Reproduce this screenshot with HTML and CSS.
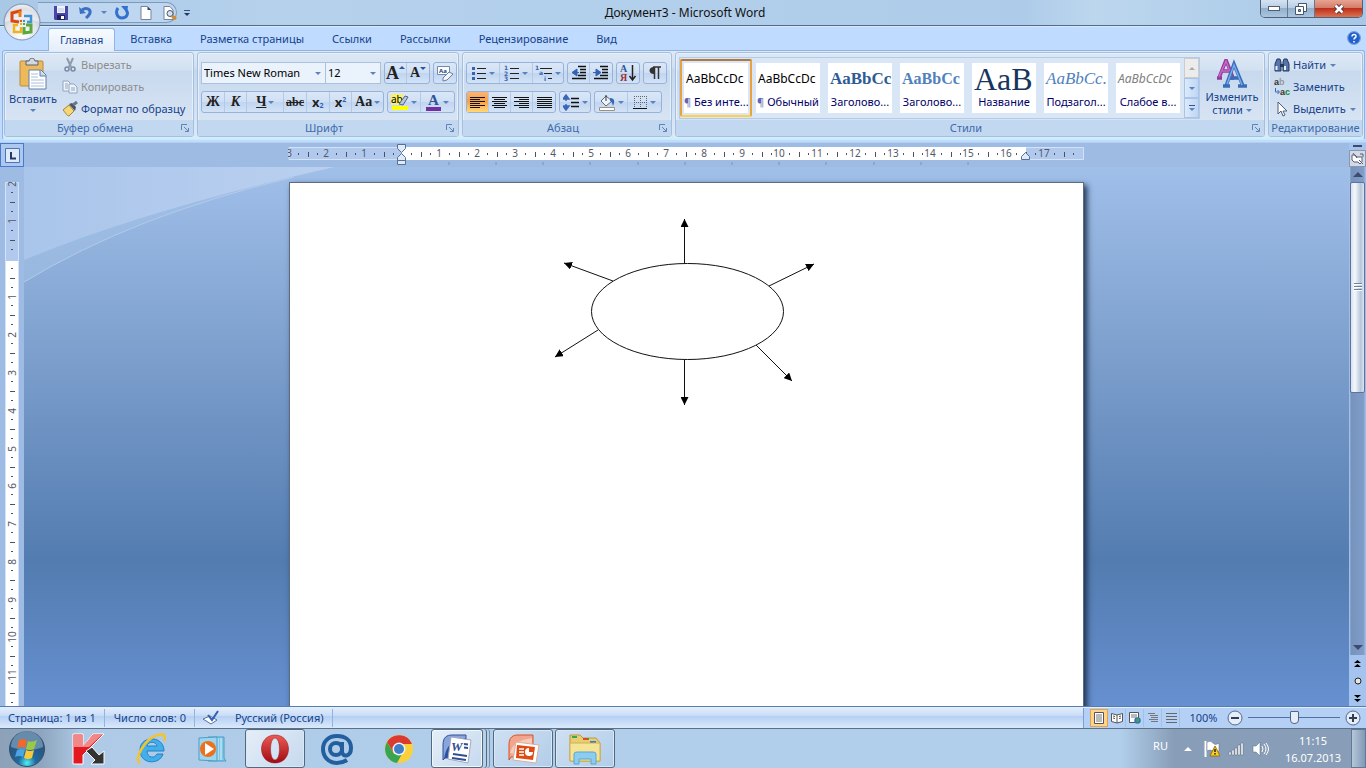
FILE: index.html
```html
<!DOCTYPE html>
<html lang="ru">
<head>
<meta charset="utf-8">
<title>Документ3 - Microsoft Word</title>
<link rel="stylesheet" href="styles.css">
</head>
<body>
<header class="titlebar">
  <div class="qat">
    <button class="ic" aria-label="Сохранить"><svg width="14" height="14" viewBox="0 0 14 14"><path d="M0 0h14v14H1L0 13z" fill="#4a45a8"/><path d="M3 0h8v7H3z" fill="#eef3fd"/><path d="M3 9h8v5H3z" fill="#23235f"/><path d="M7 10h3v3H7z" fill="#fff"/><path d="M4 3h6M4 5h6" stroke="#b9c7e6"/></svg></button>
    <button class="ic" aria-label="Отменить"><svg width="14" height="14" viewBox="0 0 14 14"><path d="M3 4c4-3 9-1 8 3-1 3-3 4-4 5" fill="none" stroke="#3d6fc4" stroke-width="3"/><path d="M0 1l1 7 6-1z" fill="#3d6fc4"/></svg></button>
    <button class="ic narrow" aria-label="Список отмены"><i class="car"></i></button>
    <button class="ic" aria-label="Повторить"><svg width="14" height="14" viewBox="0 0 14 14"><path d="M3 2C0 6 2 12 7 12s7-5 4-8" fill="none" stroke="#3470ce" stroke-width="3"/><path d="M6 0h7l-1 7z" fill="#3470ce"/></svg></button>
    <button class="ic" aria-label="Создать"><svg width="12" height="14" viewBox="0 0 12 14"><path d="M1 .5h6.500L11 4v9.500H1z" fill="#fff" stroke="#77839a"/><path d="M7.500.5V4H11z" fill="#39465e"/></svg></button>
    <button class="ic" aria-label="Просмотр"><svg width="14" height="14" viewBox="0 0 14 14"><path d="M1 .5h6L10 4v9.500H1z" fill="#fff" stroke="#77839a"/><circle cx="7" cy="7.500" r="3" fill="#cfe4f8" stroke="#4b5565"/><path d="M9 10l4 3" stroke="#d88b26" stroke-width="3"/></svg></button>
  </div>
  <button class="ic custom" aria-label="Настройка панели"><i class="bar"></i><i class="car dark"></i></button>
  <h1>Документ3 - Microsoft Word</h1>
  <div class="wincontrols">
    <button aria-label="Свернуть"><svg width="14" height="6" viewBox="0 0 14 6"><rect x="1.500" y=".5" width="11" height="4" fill="#fff" stroke="#4f5e72"/></svg></button>
    <button aria-label="Восстановить"><svg width="12" height="12" viewBox="0 0 12 12"><path d="M3.500.5h8v8h-8z" fill="#fff" stroke="#46566c"/><path d="M.5 3.500h8v8h-8z" fill="#fff" stroke="#46566c"/><path d="M3.500 6.500h2v2h-2z" fill="#8aa5c4" stroke="#46566c"/></svg></button>
    <button class="close" aria-label="Закрыть"><svg width="12" height="10" viewBox="0 0 12 10"><path d="M2.500 1.500l7 7m0-7l-7 7" stroke="#5a3038" stroke-width="4.500"/><path d="M2.500 1.500l7 7m0-7l-7 7" stroke="#fff" stroke-width="2.500"/></svg></button>
  </div>
  <button class="office" aria-label="Кнопка Office"><svg width="38" height="38" viewBox="0 0 38 38"><defs><radialGradient id="ob" cx=".5" cy=".85" r=".9"><stop offset="0" stop-color="#fff"/><stop offset=".5" stop-color="#dfe3ea"/><stop offset=".8" stop-color="#b9c1cd"/><stop offset="1" stop-color="#f5f8fb"/></radialGradient></defs><circle cx="19" cy="19" r="18" fill="url(#ob)" stroke="#7f93ad"/><path d="M2 19a17 17 0 0 1 34 0c-10-4-24-4-34 0z" fill="#fff" opacity=".5"/><g fill="none" stroke-width="3"><path d="M17 9V8l-8 2v8l7 1" stroke="#d9480f"/><path d="M17 14V8" stroke="#ee7a16"/><path d="M21 13h7v6h-4" stroke="#3f94d8" stroke-width="2.500"/><path d="M15 22h-4v7h7v-5" stroke="#f0b21d" stroke-width="2.500"/><path d="M21 24v6l7-1v-7h-5" stroke="#5aa83a"/></g><path d="M17 17h2v2h-2z" fill="#e25a10"/><path d="M20 17h2v2h-2z" fill="#3f94d8"/><path d="M17 20h2v2h-2z" fill="#f0b21d"/><path d="M20 20h2v2h-2z" fill="#5aa83a"/></svg></button>
</header>

<nav class="tabs">
  <button class="tab active">Главная</button><button class="tab">Вставка</button><button class="tab">Разметка страницы</button><button class="tab">Ссылки</button><button class="tab">Рассылки</button><button class="tab">Рецензирование</button><button class="tab">Вид</button>
  <button class="ic help" aria-label="Справка"><svg width="14" height="14" viewBox="0 0 14 14"><circle cx="7" cy="7" r="6.500" fill="#2060cf" stroke="#dbe9fb"/><circle cx="7" cy="7" r="6.500" fill="none" stroke="#396bb8" stroke-width=".6"/><path d="M5 5.500c0-3 4.500-2.500 4 0C9 7 7 6.500 7 8.500M7 10v1.500" fill="none" stroke="#fff" stroke-width="1.500"/></svg></button>
</nav>

<section class="ribbon">
  <div class="group clip">
    <div class="gbody">
      <button class="big"><svg width="28" height="32" viewBox="0 0 28 32"><rect x="1" y="3" width="23" height="25" rx="1" fill="#edb95d" stroke="#bd893b"/><path d="M7 3h3c1-4 5-4 6 0h3v4H7z" fill="#d2d8df" stroke="#59636f"/><path d="M10 12h12l5 5v14H10z" fill="#fff" stroke="#5f7fa8"/><path d="M21 12v6h6" fill="#cad8ec" stroke="#5f7fa8"/><path d="M12 16h7m-7 3h7m-7 3h13m-13 3h13m-13 3h13" stroke="#a9c0de"/></svg><span>Вставить</span><i class="car"></i></button>
      <div class="lines">
        <button class="line off"><svg width="16" height="16" viewBox="0 0 16 16"><path d="M5 1l4 9m2-9L7 10" stroke="#8e9bad" stroke-width="2"/><circle cx="5" cy="12" r="2" fill="none" stroke="#7a8aa5" stroke-width="1.500"/><circle cx="11" cy="12" r="2" fill="none" stroke="#7a8aa5" stroke-width="1.500"/></svg>Вырезать</button>
        <button class="line off"><svg width="16" height="16" viewBox="0 0 16 16"><path d="M1 2h5l3 3v7H1z" fill="#eef3fa" stroke="#91a5c1"/><path d="M7 5h5l3 3v6H7z" fill="#eef3fa" stroke="#91a5c1"/><path d="M3 5h3M3 7h3M3 9h3m3 0h4m-4 2h4" stroke="#91a5c1"/></svg>Копировать</button>
        <button class="line"><svg width="16" height="16" viewBox="0 0 16 16"><path d="M1 9l6-5 5 6-5 5c-2 0-4-4-6-6z" fill="#f4d778" stroke="#a48231"/><path d="M7 3l6 7 1-4-4-4z" fill="#4b5262"/><path d="M11 4l4-3" stroke="#68758b" stroke-width="3"/></svg>Формат по образцу</button>
      </div>
    </div>
    <footer><span>Буфер обмена</span><button class="launch" aria-label="Параметры буфера"><svg width="8" height="8" viewBox="0 0 8 8"><path d="M.5 6V.5H6M3 3l4 4M7.500 4v3.500H4" fill="none" stroke="#5f83b4"/></svg></button></footer>
  </div>

  <div class="group font">
    <div class="gbody rows">
      <div class="row">
        <div class="combos"><label class="combo name"><select aria-label="Шрифт"><option>Times New Roman</option></select><i class="car"></i></label><label class="combo size"><select aria-label="Размер шрифта"><option>12</option></select><i class="car"></i></label></div>
        <div class="seg"><button class="serif g18">A<i class="up"></i></button><button class="serif g14">A<i class="car blue"></i></button></div>
        <div class="seg"><button aria-label="Очистить формат"><svg width="17" height="17" viewBox="0 0 17 17"><path d="M.5 1.500h12v8H.5z" fill="#fff" stroke="#6f88b4"/><text x="2" y="8" class="tiny">Aa</text><path d="M6 13l6-6 4 2-6 6-4 1z" fill="#f3f5fa" stroke="#6f7d9b"/></svg></button></div>
      </div>
      <div class="row">
        <div class="seg"><button class="serif">Ж</button><button class="serif it">К</button><button class="serif w36"><u>Ч</u><i class="car"></i></button><button class="serif strike">abc</button><button class="strong">x<sub>2</sub></button><button class="strong">x<sup>2</sup></button><button class="serif w30">Aa<i class="car"></i></button></div>
        <div class="seg"><button class="w34" aria-label="Цвет выделения"><svg width="18" height="18" viewBox="0 0 18 18"><path d="M0 1h12v11H0z" fill="#f6f06a"/><text x="0" y="10" class="ab">ab</text><path d="M8 11l6-8 3 1-5 8z" fill="#b7c9e6" stroke="#4e6288"/><path d="M1 13h16v4H1z" fill="#ff0"/></svg><i class="car"></i></button><button class="w34 colorletter"><span>A</span><i class="car"></i></button></div>
      </div>
    </div>
    <footer><span>Шрифт</span><button class="launch" aria-label="Параметры шрифта"><svg width="8" height="8" viewBox="0 0 8 8"><path d="M.5 6V.5H6M3 3l4 4M7.500 4v3.500H4" fill="none" stroke="#5f83b4"/></svg></button></footer>
  </div>

  <div class="group para">
    <div class="gbody rows">
      <div class="row">
        <div class="seg"><button class="w34" aria-label="Маркеры"><svg width="16" height="16" viewBox="0 0 16 16"><path d="M1 2h3v3H1zM1 7h3v3H1zM1 12h3v3H1z" fill="#3a62b0"/><path d="M6 3.500h9m-9 5h9m-9 5h9" stroke="#222"/></svg><i class="car"></i></button><button class="w34" aria-label="Нумерация"><svg width="16" height="16" viewBox="0 0 16 16"><text x="0" y="5" class="num">1</text><text x="0" y="10.500" class="num">2</text><text x="0" y="16" class="num">3</text><path d="M6 3.500h9m-9 5h9m-9 5h9" stroke="#222"/></svg><i class="car"></i></button><button class="w30" aria-label="Многоуровневый список"><svg width="18" height="16" viewBox="0 0 18 16"><text x="0" y="5" class="num">1</text><text x="4" y="10" class="num">a</text><text x="9" y="16" class="num">i</text><path d="M5 3.500h12m-8 5h8m-4 5h4" stroke="#222"/></svg><i class="car"></i></button></div>
        <div class="seg"><button aria-label="Уменьшить отступ"><svg width="16" height="16" viewBox="0 0 16 16"><path d="M7 1.500h8M9 4.500h6M9 7.500h6M7 10.500h8M1 13.500h14" stroke="#111" stroke-width="1.500"/><path d="M6 4L1 7.500 6 11zM5 7.500h3" fill="#3561b5" stroke="#3561b5"/></svg></button><button aria-label="Увеличить отступ"><svg width="16" height="16" viewBox="0 0 16 16"><path d="M7 1.500h8M9 4.500h6M9 7.500h6M7 10.500h8M1 13.500h14" stroke="#111" stroke-width="1.500"/><path d="M3 4l5 3.500L3 11zM0 7.500h4" fill="#3561b5" stroke="#3561b5"/></svg></button></div>
        <div class="seg"><button aria-label="Сортировка"><svg width="16" height="18" viewBox="0 0 16 18"><text x="0" y="8" class="srt blue">А</text><text x="0" y="17" class="srt red">Я</text><path d="M12.500 1v14M9.500 12l3 4 3-4" fill="none" stroke="#222" stroke-width="1.500"/></svg></button></div>
        <div class="seg"><button aria-label="Знаки абзаца"><svg width="12" height="14" viewBox="0 0 12 14"><path d="M11 1H5c-6 0-6 7 0 7V1" fill="#333"/><path d="M5.500 1v12M9.500 1v12M4 1h8" stroke="#333" stroke-width="1.500"/></svg></button></div>
      </div>
      <div class="row">
        <div class="seg"><button class="on" aria-label="По левому краю"><svg width="15" height="13" viewBox="0 0 15 13"><path d="M0 1.500h15m-15 2h10m-10 2h15m-15 2h10m-10 2h15m-15 2h10" stroke="#111"/></svg></button><button aria-label="По центру"><svg width="15" height="13" viewBox="0 0 15 13"><path d="M0 1.500h15M2 3.500h11m-13 2h15m-13 2h11m-13 2h15m-13 2h11" stroke="#111"/></svg></button><button aria-label="По правому краю"><svg width="15" height="13" viewBox="0 0 15 13"><path d="M0 1.500h15m-10 2h10m-15 2h15m-10 2h10m-15 2h15m-10 2h10" stroke="#111"/></svg></button><button aria-label="По ширине"><svg width="15" height="13" viewBox="0 0 15 13"><path d="M0 1.500h15m-15 2h15m-15 2h15m-15 2h15m-15 2h15m-15 2h15" stroke="#111"/></svg></button></div>
        <div class="seg"><button class="w30" aria-label="Интервал"><svg width="17" height="17" viewBox="0 0 17 17"><path d="M3 1L0 5h6zM3 16l-3-4h6zM3 4v3m0 3v3" fill="#3a68b8" stroke="#3a68b8" stroke-width="1.500"/><path d="M8 4.500h8m-8 4h8m-8 4h8" stroke="#111" stroke-width="1.500"/></svg><i class="car"></i></button></div>
        <div class="seg"><button class="w34" aria-label="Заливка"><svg width="18" height="17" viewBox="0 0 18 17"><path d="M3 7l5-5 6 5-6 5z" fill="#eef3fa" stroke="#5c6b85"/><path d="M8 1v6" stroke="#333"/><path d="M12 4c5 0 5 4 3 8-1-3-1-4-3-5z" fill="#3a68b8"/><path d="M1.500 13.500h15v3h-15z" fill="#fff" stroke="#99927f"/></svg><i class="car"></i></button><button class="w34" aria-label="Границы"><svg width="15" height="15" viewBox="0 0 15 15"><path d="M1 1.500h13M1 7.500h13M1.500 1v12M7.500 1v12M13.500 1v12" stroke="#666" stroke-dasharray="1 1"/><path d="M0 13.500h14" stroke="#111"/></svg><i class="car"></i></button></div>
      </div>
    </div>
    <footer><span>Абзац</span><button class="launch" aria-label="Параметры абзаца"><svg width="8" height="8" viewBox="0 0 8 8"><path d="M.5 6V.5H6M3 3l4 4M7.500 4v3.500H4" fill="none" stroke="#5f83b4"/></svg></button></footer>
  </div>

  <div class="group styles">
    <div class="gbody">
      <div class="gallery">
        <button class="style sel"><b class="p1">AaBbCcDc</b><span><em>¶</em> Без инте...</span></button>
        <button class="style"><b class="p1">AaBbCcDc</b><span><em>¶</em> Обычный</span></button>
        <button class="style"><b class="p3">AaBbCc</b><span>Заголово...</span></button>
        <button class="style"><b class="p4">AaBbCc</b><span>Заголово...</span></button>
        <button class="style"><b class="p5">AaB</b><span>Название</span></button>
        <button class="style"><b class="p6">AaBbCc.</b><span>Подзагол...</span></button>
        <button class="style"><b class="p7">AaBbCcDc</b><span>Слабое в...</span></button>
        <div class="gscroll"><button class="dim" aria-label="Вверх"><i class="up"></i></button><button aria-label="Вниз"><i class="car"></i></button><button aria-label="Ещё"><i class="bar"></i><i class="car"></i></button></div>
      </div>
      <button class="big change"><svg width="30" height="30" viewBox="0 0 30 30"><path d="M2 19L9 1l7 18M5 12h8M0 19h5m8 0h4" fill="none" stroke="#8e3d99" stroke-width="3.500"/><path d="M2 18L9 2l6 16M5 12h8" fill="none" stroke="#cf62ca" stroke-width="1.500"/><path d="M9 27l8-22 9 22M12 19h11M6 27h7m8 0h9" fill="none" stroke="#376db9" stroke-width="3.500"/><path d="M10 25l7-19 8 20" fill="none" stroke="#77abe9" stroke-width="1.500"/></svg><span>Изменить<br>стили <i class="car"></i></span></button>
    </div>
    <footer><span>Стили</span><button class="launch" aria-label="Окно стилей"><svg width="8" height="8" viewBox="0 0 8 8"><path d="M.5 6V.5H6M3 3l4 4M7.500 4v3.500H4" fill="none" stroke="#5f83b4"/></svg></button></footer>
  </div>

  <div class="group edit">
    <div class="gbody"><div class="lines">
      <button class="line"><svg width="16" height="16" viewBox="0 0 16 16"><path d="M3 2h3l1 3v9H1V7zM10 2h3l2 5v7H9V5z" fill="#5575ac" stroke="#23395f"/><path d="M6 7h4v3H6z" fill="#23395f"/><path d="M2.500 9v4M11 9v4" stroke="#e9f1fc" stroke-width="2"/></svg>Найти<i class="car"></i></button>
      <button class="line"><svg class="open" width="16" height="20" viewBox="0 0 16 20"><text x="0" y="8" class="rep">a<tspan fill="#999">b</tspan></text><text x="6" y="18" class="rep">a<tspan fill="#178a17">c</tspan></text><path d="M1.500 11v4H5M3.500 13L5.500 15l-2 2" fill="none" stroke="#3a68b8"/></svg>Заменить</button>
      <button class="line"><svg width="16" height="16" viewBox="0 0 16 16"><path d="M4 1v12l3-3 2 5 2-1-2-4h4z" fill="#fff" stroke="#4c5e7d"/></svg>Выделить<i class="car"></i></button>
    </div></div>
    <footer><span>Редактирование</span></footer>
  </div>
</section>

<main class="work">
  <button class="tabstop" aria-label="Табуляция"><svg width="15" height="15" viewBox="0 0 15 15"><path d="M.5.5h14v14H.5z" fill="#dfe9f7" stroke="#4874c4"/><path d="M6 4v6.500h5" fill="none" stroke="#243a66" stroke-width="2"/></svg></button>
  <div class="hruler">
    <svg width="797" height="24" viewBox="-1 0 797 24">
      <path d="M0 4.500h794.500v12H0z" fill="#b1c9ec" stroke="#d3e2f7"/><path d="M113 4h624v13H113z" fill="#fff"/>
      <g stroke="#4b5361" stroke-dasharray="1 36.800" shape-rendering="crispEdges"><path d="M9 11H790M28 11H790" stroke-width="2"/><path d="M19 11H790" stroke-width="5"/></g>
      <g class="rulenum"><text x="0" y="14">3</text><text x="37" y="14">2</text><text x="75" y="14">1</text><text x="150" y="14">1</text><text x="188" y="14">2</text><text x="226" y="14">3</text><text x="264" y="14">4</text><text x="302" y="14">5</text><text x="339" y="14">6</text><text x="377" y="14">7</text><text x="415" y="14">8</text><text x="453" y="14">9</text><text x="490" y="14">10</text><text x="528" y="14">11</text><text x="566" y="14">12</text><text x="604" y="14">13</text><text x="641" y="14">14</text><text x="679" y="14">15</text><text x="717" y="14">16</text><text x="755" y="14">17</text></g>
      <path d="M160 19v3m47-3v3m47-3v3m47-3v3m48-3v3m47-3v3m47-3v3m47-3v3m47-3v3m48-3v3m47-3v3m47-3v3" stroke="#8092ad"/>
      <g fill="#e2eaf6" stroke="#53709f"><path d="M108.500 1.500h8v4l-4 4-4-4zM108.500 17.500v-3l4-4 4 4v3zM108.500 17.500h8v4h-8zM732.500 16.500v-3l4-4 4 4v3z"/></g>
    </svg>
  </div>
  <div class="corner"><i></i><button aria-label="Линейка"><svg width="15" height="15" viewBox="0 0 15 15"><path d="M2 4h3l2 2h5v5l-2 2-2-2H4L2 9z" fill="#fff" stroke="#525f7a"/><path d="M3 2l4 5M10 3h3v3M9 9l4 4" stroke="#525f7a" fill="none"/></svg></button></div>
  <div class="vruler">
    <svg width="14" height="1122" viewBox="0 0 14 1122">
      <path d="M.5.500h13V1200H.5z" fill="#b1c9ec" stroke="#d3e2f7"/><path d="M1 79h12v1043H1z" fill="#fff"/>
      <g stroke="#4b5361" stroke-dasharray="1 36.800" shape-rendering="crispEdges"><path d="M7 10V1122M7 29V1122" stroke-width="2"/><path d="M7.500 20V1122" stroke-width="5"/></g>
      <g class="rulenum"><text transform="translate(11 2) rotate(-90)">2</text><text transform="translate(11 39) rotate(-90)">1</text><text transform="translate(11 115) rotate(-90)">1</text><text transform="translate(11 153) rotate(-90)">2</text><text transform="translate(11 191) rotate(-90)">3</text><text transform="translate(11 229) rotate(-90)">4</text><text transform="translate(11 267) rotate(-90)">5</text><text transform="translate(11 304) rotate(-90)">6</text><text transform="translate(11 342) rotate(-90)">7</text><text transform="translate(11 380) rotate(-90)">8</text><text transform="translate(11 418) rotate(-90)">9</text><text transform="translate(11 455) rotate(-90)">10</text><text transform="translate(11 493) rotate(-90)">11</text></g>
    </svg>
  </div>
  <div class="canvas">
    <svg class="swoosh" width="310" height="118" viewBox="0 0 310 118"><defs><linearGradient id="sw" x2="1"><stop offset="0" stop-color="#a9c5ea"/><stop offset="1" stop-color="#bbd0f0"/></linearGradient></defs><path d="M0 115Q110 48 265 12L310 0 0 0z" fill="#a2bfe4" opacity=".6"/><path d="M0 93Q120 43 310 0H0z" fill="url(#sw)"/><path d="M0 115Q110 48 270 10" fill="none" stroke="#b2caeb"/></svg>
    <article class="page">
      <svg width="793" height="523" viewBox="1 1 793 523"><defs><marker id="ah" viewBox="0 0 8 8" refX="8" refY="4" markerWidth="8" markerHeight="8" markerUnits="userSpaceOnUse" orient="auto"><path d="M0 0l8 4-8 4z"/></marker></defs>
      <ellipse cx="398.500" cy="129.500" rx="96" ry="48" fill="#fff" stroke="#111"/>
      <g stroke="#111"><path d="M395.500 81V37" marker-end="url(#ah)"/><path d="M324 99l-49-18" marker-end="url(#ah)"/><path d="M480 104l45-22" marker-end="url(#ah)"/><path d="M309 148l-43 27" marker-end="url(#ah)"/><path d="M395.500 178v45" marker-end="url(#ah)"/><path d="M467 163l36 36" marker-end="url(#ah)"/></g></svg>
    </article>
  </div>
  <div class="scroll">
    <button class="sb" aria-label="Прокрутить вверх"><i class="up"></i></button>
    <div class="track"><div class="thumb"><i></i><i></i><i></i></div></div>
    <button class="sb" aria-label="Прокрутить вниз"><i class="car"></i></button>
    <div class="browse"><button aria-label="Предыдущая страница"><svg width="7" height="8" viewBox="0 0 7 8"><path d="M0 3l3.500-3L7 3zM0 7l3.500-3L7 7z"/></svg></button><button aria-label="Выбор объекта"><svg width="8" height="8" viewBox="0 0 8 8"><circle cx="4" cy="4" r="3" fill="#e6e6df" stroke="#222"/></svg></button><button aria-label="Следующая страница"><svg width="7" height="8" viewBox="0 0 7 8"><path d="M0 1l3.500 3L7 1zM0 5l3.500 3L7 5z"/></svg></button></div>
  </div>
</main>

<div class="status">
  <span>Страница: 1 из 1</span><span>Число слов: 0</span><span class="lang"><svg width="17" height="15" viewBox="0 0 17 15"><path d="M0 9l7-3 7 4-6 4z" fill="#fff" stroke="#5572a5"/><path d="M5 5l4 5 6-9" fill="none" stroke="#335fae" stroke-width="2"/></svg>Русский (Россия)</span>
  <div class="views"><button class="on" aria-label="Разметка"><svg width="12" height="12" viewBox="0 0 12 12"><path d="M1.500.5h9v11h-9z" fill="#fff" stroke="#555"/><path d="M3 3h6M3 5h6M3 7h6M3 9h6" stroke="#777"/></svg></button><button aria-label="Чтение"><svg width="12" height="12" viewBox="0 0 12 12"><path d="M.5 1.500L6 3l5.500-1.500v8L6 11 .5 9.500zM6 3v8" fill="#fff" stroke="#555"/><path d="M2 4l2 .5M2 6l2 .5M8 4.500l2-.5M8 6.500l2-.5" stroke="#555"/></svg></button><button aria-label="Веб-документ"><svg width="12" height="12" viewBox="0 0 12 12"><path d="M.5.5h9v10h-9z" fill="#fff" stroke="#555"/><path d="M2 3h6M2 5h6" stroke="#777"/><circle cx="8.500" cy="8.500" r="3.200" fill="#2d74b9"/><path d="M7 7l3-1v3l-2 2z" fill="#4ea24d"/></svg></button><button aria-label="Структура"><svg width="12" height="12" viewBox="0 0 12 12"><path d="M1 1.500h7m-5 2h8m-7 2h7m-9 2h9m-7 2h7" stroke="#777"/></svg></button><button aria-label="Черновик"><svg width="12" height="12" viewBox="0 0 12 12"><path d="M1 1.500h11m-11 3h11m-11 3h11m-11 3h11" stroke="#666"/></svg></button></div>
  <button class="pct">100%</button>
  <button class="ic zoomb" aria-label="Уменьшить"><svg width="16" height="16" viewBox="0 0 16 16"><circle cx="8" cy="8" r="7" fill="#e5edf9" stroke="#53698e"/><path d="M4 8h8" stroke="#333e55" stroke-width="2"/></svg></button>
  <input class="zoom" type="range" min="0" max="100" value="50" aria-label="Масштаб">
  <button class="ic zoomb" aria-label="Увеличить"><svg width="16" height="16" viewBox="0 0 16 16"><circle cx="8" cy="8" r="7" fill="#e5edf9" stroke="#53698e"/><path d="M4 8h8M8 4v8" stroke="#333e55" stroke-width="2"/></svg></button>
</div>

<footer class="taskbar">
  <button class="start" aria-label="Пуск"><svg width="38" height="38" viewBox="0 0 38 38"><defs><radialGradient id="st" cy=".9"><stop offset="0" stop-color="#4ff0f6"/><stop offset=".5" stop-color="#216a9f"/><stop offset="1" stop-color="#285a86"/></radialGradient></defs><circle cx="19" cy="19" r="17.500" fill="url(#st)" stroke="#344f6b"/><path d="M3 17a16 16 0 0 1 32 0c-9 4-22 4-32 0z" fill="#c0d8e8" opacity=".4"/><path d="M11 10q4-2 8 0l-2 8q-4-2-8 0z" fill="#f0682b"/><path d="M20 11q4 2 9-1l-3 9q-4 2-8 0z" fill="#9ac947"/><path d="M9 20q4-2 8 0l-2 7q-4-2-8 0z" fill="#4ba6e3"/><path d="M18 20q4 2 8 0l-2 8q-4 2-8 0z" fill="#fbc837"/></svg></button>
  <button class="task" aria-label="Kaspersky"><svg width="34" height="32" viewBox="0 0 34 32"><path d="M1 1h10v12L21 1h11L18 15l-7 7v9H1z" fill="#e21a20" stroke="#fff"/><path d="M2 2h8v11L21 2h9L17 14H2z" fill="#f6a3a4" opacity=".8"/><path d="M14 18l6-4 7 8 5-4v13H19l4-4z" fill="#333" stroke="#fff"/></svg></button>
  <button class="task" aria-label="Internet Explorer"><svg width="32" height="32" viewBox="0 0 32 32"><path d="M28 21c-3 11-23 11-23-4C5 2 29 2 29 18H12c0 7 8 8 10 3zM12 13h10c-1-5-9-5-10 0z" fill="#42aeea" stroke="#2280c8"/><path d="M5 30c-7-3 5-25 18-28 6-2 8 1 6 6" fill="none" stroke="#f4c42b" stroke-width="2.500"/></svg></button>
  <button class="task" aria-label="Проигрыватель"><svg width="30" height="28" viewBox="0 0 30 28"><path d="M10 2h16v21l2 3H10z" fill="#81c7e5" stroke="#4c9cc3"/><path d="M23 3v22M20 3v22" stroke="#d9f2fb"/><path d="M1 3l18-1v24L1 25z" fill="#9cd6ee" stroke="#4d9dc6"/><circle cx="10" cy="14" r="8" fill="#ee701c"/><path d="M7 8l9 6-9 6z" fill="#fff"/></svg></button>
  <button class="task run lit" aria-label="Opera"><svg width="30" height="32" viewBox="0 0 30 32"><defs><linearGradient id="op" y2="1" x2="0"><stop stop-color="#ee5b52"/><stop offset="1" stop-color="#a00b13"/></linearGradient></defs><path d="M15 2C-3 2-3 30 15 30S33 2 15 2zm0 3c6 0 6 22 0 22S9 5 15 5z" fill="url(#op)" stroke="#8e1117" stroke-width=".5"/></svg></button>
  <button class="task" aria-label="Почта"><svg width="34" height="32" viewBox="0 0 34 32"><g fill="none" stroke="#235f9f"><circle cx="16" cy="16" r="6" stroke-width="4"/><path d="M22 9v9c0 7 9 6 9-3C31 7 25 3 17 3 8 3 3 9 3 16s5 14 14 14c4 0 7-1 10-3" stroke-width="4"/></g></svg></button>
  <button class="task" aria-label="Chrome"><svg width="30" height="30" viewBox="0 0 30 30"><circle cx="15" cy="15" r="14" fill="#fbd13b"/><path d="M3 8a14 14 0 0 1 25 2H15l-6 8z" fill="#da3a30"/><path d="M3 8l7 12 8 0-5 9A14 14 0 0 1 3 8z" fill="#3ba450"/><circle cx="15" cy="15" r="6.500" fill="#eef3f7"/><circle cx="15" cy="15" r="5" fill="#3e7fc7"/></svg></button>
  <button class="task run word lit" aria-label="Word"><svg width="34" height="32" viewBox="0 0 34 32"><path d="M3 27V12C3 4 7 2 12 2h14v23H5z" fill="#89a5dc" stroke="#305397"/><path d="M4 27C6 12 12 7 26 5v20H4z" fill="#2d52a1"/><path d="M11 4l20 3-3 23-20-4z" fill="#fff" stroke="#a2aac0"/><text x="11" y="18" class="wletter">W</text><path d="M24 11l4 .5m-4 3l4 .5M13 21l14 2m-15 2l14 2" stroke="#304f96" stroke-width="2"/></svg></button>
  <button class="task run ppt" aria-label="PowerPoint"><svg width="34" height="32" viewBox="0 0 34 32"><path d="M3 27V12C3 4 7 2 12 2h15v22H5z" fill="#f2a58b" stroke="#d75329"/><path d="M4 20C6 12 12 7 26 5v19z" fill="#f7cabb"/><path d="M10 9l23 3-3 18-23-3z" fill="#fff" stroke="#d5afa4"/><path d="M11 12l18 2-2 13-17-2z" fill="#df4b12"/><path d="M13 16h5m-5 3h5m-5 3h5" stroke="#fff" stroke-width="1.500"/><circle cx="23" cy="19" r="4" fill="#fff"/><path d="M23 19v-4h5v4z" fill="#df4b12"/></svg></button>
  <button class="task run" aria-label="Проводник"><svg width="34" height="32" viewBox="0 0 34 32"><path d="M2 2h10l3 3h13l4 5v18H2z" fill="#e9cd73" stroke="#bd9a3e"/><path d="M4 4h5M15 6h6M22 9h6" stroke="#3aa84c" stroke-width="2"/><path d="M15 6h5" stroke="#d84a32" stroke-width="2"/><path d="M22 9h6" stroke="#2a82cb" stroke-width="2"/><path d="M2 10h30v18H2z" fill="#f5e496" stroke="#cdb050"/><path d="M6 31V21q0-2 3-2h16q3 0 3 2v10h-5v-5H11v5z" fill="#8bcdf0" stroke="#5aa6d2"/></svg></button>
  <div class="tray"><span class="ru">RU</span><i class="up white"></i>
    <svg width="16" height="18" viewBox="0 0 16 18"><path d="M1.500 1v16" stroke="#fff" stroke-width="2"/><path d="M3 2q4-2 6 1t6 0v8q-3 2-6 0t-6 0z" fill="#fff" stroke="#5d6d7f" stroke-width=".5"/><path d="M11 6l5 10H6z" fill="#ffce25" stroke="#977412"/><path d="M11 9v3m0 1v1.500" stroke="#222" stroke-width="1.500"/></svg>
    <svg width="16" height="14" viewBox="0 0 16 14"><path d="M1 10h2v3H1zM4 8h2v5H4zM7 6h2v7H7zM10 3h2v10h-2zM13 1h2v12h-2z" fill="#fff" stroke="#59687b" stroke-width=".5"/></svg>
    <svg width="17" height="14" viewBox="0 0 17 14"><path d="M1 4h3l4-4v14l-4-4H1z" fill="#fff" stroke="#59687b" stroke-width=".5"/><path d="M10 4q2 3 0 6m2-8q4 5 0 10m2-11q5 6 0 12" fill="none" stroke="#fff"/></svg>
    <time>11:15<br>16.07.2013</time></div>
  <button class="desk" aria-label="Рабочий стол"></button>
</footer>
</body>
</html>
```
FILE: styles.css
```css
* { box-sizing: border-box; }
body {
  margin: 0; height: 100vh; overflow: hidden; display: flex; flex-direction: column;
  font: 11px/14px "Noto Sans", "Open Sans", sans-serif; color: #15428b; background: #bfdbff;
}
button { font: inherit; color: inherit; background: none; border: 0; padding: 0; margin: 0; }
svg { display: block; flex: none; }
svg.open { overflow: visible; }
i { display: block; flex: none; }
.car { width: 0; height: 0; border: 3px solid transparent; border-top-color: #5a82bb; border-bottom: 0; }
.up { width: 0; height: 0; border: 3px solid transparent; border-bottom-color: #31549a; border-top: 0; }
.car.dark { border-top-color: #1f3a6b; }
.car.blue { border-top-color: #31549a; }
.bar { width: 6px; height: 1px; background: #2f5590; margin-bottom: 2px; }
.ic { display: flex; align-items: center; justify-content: center; }

.titlebar {
  position: relative; flex: none; height: 26px; display: flex; align-items: center;
  padding-left: 38px; background: linear-gradient(90deg, #a9c8e5, #b5d1ec 20%, #aecce9 75%, #bcd6ee 80%, #a7c8e6);
  border-bottom: 1px solid #526b87; box-shadow: 0 1px #d9e8fb;
}
.qat {
  width: 139px; height: 21px; display: flex; align-items: center; gap: 11px; padding-left: 16px;
  border: 1px solid #7f99b9; border-left: 0; border-radius: 0 11px 11px 0; background: #bed6ef;
}
.qat .ic { width: 14px; }
.qat .narrow { width: 6px; margin: 0 -3px; }
.custom { flex-direction: column; margin-left: 7px; }
.titlebar h1 { flex: 1; margin: 0; font-size: 12px; font-weight: 400; color: #111; text-align: center; padding-right: 80px; }
.wincontrols { display: flex; align-self: flex-start; height: 18px; margin-right: 3px; border: 1px solid #50627a; border-top: 0; border-radius: 0 0 5px 5px; overflow: hidden; }
.wincontrols button { width: 27px; display: flex; align-items: center; justify-content: center; background: linear-gradient(#d4e3f2, #b9cee3 45%, #93afcb 50%, #aac5df); border-right: 1px solid #64788f; }
.wincontrols .close { width: 47px; border: 0; background: linear-gradient(#e6a491, #d67c69 45%, #bd301b 50%, #dc7251); }
.office { position: absolute; left: 3px; top: 3px; z-index: 2; }

.tabs { flex: none; height: 24px; display: flex; align-items: flex-end; padding: 0 5px 0 48px; gap: 6px; background: #bfdbff; }
.tab { height: 22px; padding: 0 11px; }
.tab.active { margin: 0 -2px -1px 0; height: 23px; position: relative; border: 1px solid #92b6e2; border-bottom: 0; border-radius: 3px 3px 0 0; background: linear-gradient(#f7fbff, #e4eefa); }
.help { margin-left: auto; align-self: center; }

.ribbon { flex: none; height: 90px; margin: 0 1px 0 2px; padding: 1px 3px 2px 1px; display: flex; gap: 3px; border: 1px solid #8db2e3; border-bottom-color: #b6f3ff; border-radius: 3px; background: linear-gradient(#dfe9f5, #d3e0f1 18%, #c7d8ed 22%, #dce9f7); }
.group { flex: none; display: flex; flex-direction: column; border: 1px solid #a3c0e0; border-radius: 3px; background: linear-gradient(#dde8f5, #d3e1f1 20%, #c8d9ee 22%, #dbe7f5); box-shadow: inset 0 0 0 1px #e6effa; overflow: hidden; }
.clip { width: 190px; } .font { width: 262px; } .para { width: 210px; } .styles { flex: 1; min-width: 590px; } .edit { width: 95px; }
.gbody { flex: 1; display: flex; min-height: 0; }
.group footer { flex: none; height: 16px; display: flex; align-items: center; padding: 0 4px; background: #c1d8f0; color: #3e6aaa; }
.group footer span { flex: 1; text-align: center; }
.edit footer { padding: 0; }
.launch { width: 8px; }
.big { display: flex; flex-direction: column; align-items: center; padding-top: 5px; width: 56px; }
.big span { margin: 2px 0 3px; }
.lines { display: flex; flex-direction: column; padding-top: 1px; }
.line { height: 22px; display: flex; align-items: center; gap: 3px; white-space: nowrap; }
.clip .line { padding-left: 1px; }
.line .car { margin-left: 1px; }
.line.off { color: #8d8d8d; }
.edit .lines { padding-left: 5px; }

.rows { flex-direction: column; padding: 9px 3px 0; gap: 7px; }
.row { display: flex; gap: 3px; }
.combos { display: flex; }
.combo { position: relative; display: flex; align-items: center; height: 22px; background: #eaf2fb; border: 1px solid #abc1de; }
.combo.name { width: 125px; } .combo.size { width: 55px; border-left: 0; }
.combo select { appearance: none; width: 100%; border: 0; background: none; font: inherit; color: #000; padding: 0 2px; }
.combo .car { position: absolute; right: 4px; }
.seg { display: flex; height: 22px; border: 1px solid #94b3dd; border-radius: 3px; background: linear-gradient(#dbe7f7, #cfdff4 50%, #c1d5f0 52%, #d3e3f6); }
.seg button { width: 22px; display: flex; align-items: center; justify-content: center; gap: 2px; color: #222; border-right: 1px solid #b2cae9; }
.seg button:last-child { border-right: 0; }
.seg .w36 { width: 36px; } .seg .w34 { width: 33px; } .seg .w30 { width: 30px; }
.font .row:last-child .seg:first-child { flex: 1; }
.font .row:last-child .seg:first-child button { flex: 1 0 auto; }
.seg .serif { font-family: "Liberation Serif", serif; font-weight: 700; font-size: 14px; }
.seg .g18 { font-size: 18px; gap: 0; align-items: flex-start; padding-top: 3px; } .seg .g14 { font-size: 14px; gap: 0; }
.g14 .car { align-self: flex-start; margin-top: 4px; }
.seg .it { font-style: italic; }
.seg .strike { font-size: 12px; text-decoration: line-through; }
.seg .strong { font-weight: 700; font-size: 13px; gap: 0; }
.strong sub, .strong sup { font-size: 7px; color: #2f5fb5; line-height: 7px; }
.strong sub { align-self: flex-end; margin-bottom: 3px; } .strong sup { align-self: flex-start; margin-top: 4px; }
.colorletter span { font: 700 15px/14px "Liberation Serif", serif; color: #30549a; border-bottom: 4px solid #7030a0; padding: 0 2px; }
.seg .on { background: linear-gradient(#f7b577, #fb9d42 45%, #ffd878); }
.tiny { font: 700 6px "Noto Sans", sans-serif; fill: #26427a; }
.ab { font: 10px "Noto Sans", sans-serif; }
.num { font: 700 6px "DejaVu Sans", sans-serif; fill: #3a62b0; }
.srt { font: 700 10px "Liberation Serif", serif; } .srt.blue { fill: #2e5699; } .srt.red { fill: #9d3232; }
.rep { font: 700 9px/9px "Liberation Sans", sans-serif; fill: #333; }

.gallery { display: flex; align-self: flex-start; margin: 4px 0 0 3px; height: 62px; background: #d8e6f6; border: 1px solid #b3cbe8; }
.style { width: 72px; height: 58px; margin-top: 1px; padding: 4px; border: 0; display: flex; }
.style { flex-direction: column; background: #fff content-box; overflow: hidden; }
.style b { height: 32px; width: 64px; padding: 0 2px; overflow: hidden; display: flex; align-items: center; font-weight: 400; color: #000; white-space: nowrap; }
.style span { width: 64px; text-align: center; color: #00006b; white-space: nowrap; }
.style em { font-style: normal; color: #5f67b5; }
.style.sel { padding: 2px; border: 2px solid #eaa13e; border-top-color: #ae7944; border-bottom-color: #ffd14b; border-radius: 2px; }
.style .p1 { font-size: 12px; }
.style .p3, .style .p4 { font: 700 17px/20px "Liberation Serif", serif; color: #2e5b94; } .style .p4 { font-size: 16px; color: #4f81bd; }
.style .p5 { font: 32px/32px "Liberation Serif", serif; color: #17365d; }
.style .p6 { font: italic 17px/20px "Liberation Serif", serif; color: #4f81bd; }
.style .p7 { font-style: italic; font-size: 12px; color: #808080; }
.gscroll { width: 15px; display: flex; flex-direction: column; }
.gscroll button { flex: 1; display: flex; flex-direction: column; align-items: center; justify-content: center; border: 1px solid #a9c4e7; background: linear-gradient(90deg, #dceafb, #bfd6f4); }
.gscroll .dim { background: #ececec; border-color: #ccc; } .gscroll .dim .up { border-bottom-color: #aaa; }
.change { flex: 1; padding-top: 6px; min-width: 60px; }
.change span { margin-top: 1px; line-height: 13px; }
.change span .car { display: inline-block; vertical-align: 2px; }

.work { flex: 1; min-height: 0; margin-top: 2px; display: grid; grid-template-columns: 24px 1fr 17px; grid-template-rows: 24px 1fr; background: #9dbbe3; border-top: 1px solid #b7cdec; }
.tabstop { border: 1px solid #4b78ca; background: #adc8ef; display: flex; align-items: center; justify-content: center; }
.hruler { display: flex; justify-content: center; }
.rulenum text { font: 10px "Noto Sans", sans-serif; fill: #53596a; text-anchor: middle; }
.corner { background: #a5c3ef; display: flex; flex-direction: column; align-items: center; gap: 3px; padding-top: 2px; }
.corner i { width: 9px; height: 2px; background: #3f4868; }
.corner button { background: #d4d9e4; border: 1px solid #8a97b0; }
.vruler { overflow: hidden; padding: 15px 0 0 5px; }
.canvas { position: relative; overflow: hidden; display: flex; justify-content: center; padding-top: 15px; background: linear-gradient(#a0c0ea, #89aad6 23%, #537cb0 73%, #6690d0); }
.swoosh { position: absolute; left: 0; top: 0; }
.page { position: relative; width: 795px; height: 1123px; flex: none; background: #fff; border: 1px solid #5d6b80; box-shadow: 3px 3px 6px #1c304e; }
.scroll { display: flex; flex-direction: column; background: linear-gradient(90deg, #b3cdf0, #7593bd 12%, #7f9dc7 85%, #a5c3ef); }
.sb { height: 15px; display: flex; align-items: center; justify-content: center; }
.sb .up { border-width: 0 5px 5px; border-bottom-color: #404a70; } .sb .car { border-width: 5px 5px 0; border-top-color: #404a70; }
.track { flex: 1; padding: 0 1px; }
.thumb { height: 46%; border: 1px solid #5d72a0; border-radius: 2px; background: linear-gradient(90deg, #d6e1ef, #f5f8fb 30%, #b5c5db 75%, #dce6f1); display: flex; flex-direction: column; align-items: center; justify-content: center; gap: 1px; }
.thumb i { width: 8px; height: 2px; background: #71829e; border-bottom: 1px solid #fff; }
.browse { background: #a5c3ef; height: 51px; display: flex; flex-direction: column; align-items: center; justify-content: space-around; }

.status { flex: none; height: 22px; display: flex; align-items: center; padding-left: 8px; border-top: 1px solid #567db1; background: linear-gradient(#e3effd, #cbddf6 40%, #b5d0f3 45%, #dae9fc); }
.status > span { padding-right: 8px; margin-right: 9px; height: 18px; line-height: 17px; border-right: 1px solid #92b5de; }
.status .lang { display: flex; align-items: center; gap: 15px; margin-left: -1px; }
.views { margin-left: auto; height: 20px; display: flex; align-items: center; padding: 0 5px 0 6px; border-left: 1px solid #7d9fd0; }
.views button { width: 18px; height: 18px; display: flex; align-items: center; justify-content: center; border-right: 1px solid #a3bfe5; }
.views .on { background: #ffd38a; border: 1px solid #e0a24e; }
.views, .pct, .zoomb, .zoom { background-color: #b5d0f5; }
.pct { height: 20px; width: 37px; line-height: 18px; }
.zoomb { height: 20px; width: 26px; }
.zoom { appearance: none; width: 92px; height: 20px; margin: 0; background-image: linear-gradient(#526f9e, #526f9e); background-size: 100% 1px; background-position: center; background-repeat: no-repeat; }
.zoom::-webkit-slider-thumb { appearance: none; width: 9px; height: 13px; border: 1px solid #526588; background: #e5edf8; border-radius: 1px 1px 4px 4px; }

.taskbar { flex: none; height: 40px; display: flex; gap: 2px; border-top: 1px solid #5c7187; background: linear-gradient(90deg, #8da2b8, #8da5be 3%, #aecae6 6%, #b1cfeb 50%, #b1cfeb 82%, #889db7 86%); }
.start { width: 57px; padding-left: 8px; }
.task { width: 60px; display: flex; align-items: center; justify-content: center; }
.run { border: 1px solid #53697f; border-radius: 3px; background: linear-gradient(135deg, #cfe0f2, #b2cde9); box-shadow: inset 0 0 0 1px #d8e8f6; }
.lit { background: linear-gradient(135deg, #e5eef8, #c5d9ee); }
.word { width: 52px; margin-right: 8px; box-shadow: inset 0 0 0 1px #f1f7fd, 3px 0 #b5d0e9, 4px 0 #53697f, 6px 0 #b5d0e9, 7px 0 #7890a8; }
.wletter { font: italic 700 13px "Liberation Serif", serif; fill: #304f96; }
.tray { margin-left: auto; display: flex; align-items: center; gap: 8px; color: #fff; }
.tray .ru { margin: -6px 8px 0 0; }
.tray .up { border-width: 0 4px 4px; border-bottom-color: #fff; margin-right: 4px; }
.tray time { width: 72px; text-align: center; line-height: 17px; }
.desk { width: 15px; border: 1px solid #5f7a96; background: linear-gradient(90deg, #b7c7d8, #8199b4); }
```
